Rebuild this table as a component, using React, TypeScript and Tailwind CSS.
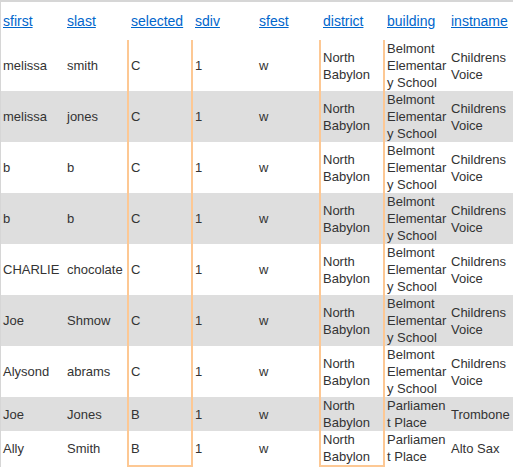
const cols = ["sfirst", "slast", "selected", "sdiv", "sfest", "district", "building", "instname"]

const rows = [
  ["melissa", "smith", "C", "1", "w", "North Babylon", "Belmont Elementary School", "Childrens Voice"],
  ["melissa", "jones", "C", "1", "w", "North Babylon", "Belmont Elementary School", "Childrens Voice"],
  ["b", "b", "C", "1", "w", "North Babylon", "Belmont Elementary School", "Childrens Voice"],
  ["b", "b", "C", "1", "w", "North Babylon", "Belmont Elementary School", "Childrens Voice"],
  ["CHARLIE", "chocolate", "C", "1", "w", "North Babylon", "Belmont Elementary School", "Childrens Voice"],
  ["Joe", "Shmow", "C", "1", "w", "North Babylon", "Belmont Elementary School", "Childrens Voice"],
  ["Alysond", "abrams", "C", "1", "w", "North Babylon", "Belmont Elementary School", "Childrens Voice"],
  ["Joe", "Jones", "B", "1", "w", "North Babylon", "Parliament Place", "Trombone"],
  ["Ally", "Smith", "B", "1", "w", "North Babylon", "Parliament Place", "Alto Sax"],
]

// columns that get the orange frame
const framed = [2, 5]

export default function App() {
  return (
    <div className="w-[513px] min-h-[467px] bg-white border-t-2 border-l border-[#d6d6d6] font-['Liberation_Sans',Arial,sans-serif]">
      {/* header */}
      <div className="flex gap-x-[2px] h-[38px] items-center">
        {cols.map((c) => (
          <div key={c} className="w-[62px] pl-[2px] text-[14px]">
            <a href="#" className="text-[#0066cc] underline">{c}</a>
          </div>
        ))}
      </div>
      {/* body */}
      {rows.map((r, i) => {
        const last = i === rows.length - 1
        return (
          <div key={i} className={`flex gap-x-[2px] ${i % 2 === 1 ? "bg-[#dedede]" : "bg-white"}`}>
            {r.map((v, j) => (
              <div
                key={j}
                className={`w-[62px] shrink-0 pl-[2px] flex items-center text-[13px] leading-[17px] text-[#333] ${
                  framed.includes(j)
                    ? last
                      ? "shadow-[-2px_0_0_#fdc894,2px_0_0_#fdc894,-2px_2px_0_#fdc894,2px_2px_0_#fdc894]"
                      : "shadow-[-2px_0_0_#fdc894,2px_0_0_#fdc894]"
                    : ""
                }`}
              >
                <span className="block w-full break-words">{v}</span>
              </div>
            ))}
          </div>
        )
      })}
    </div>
  )
}
